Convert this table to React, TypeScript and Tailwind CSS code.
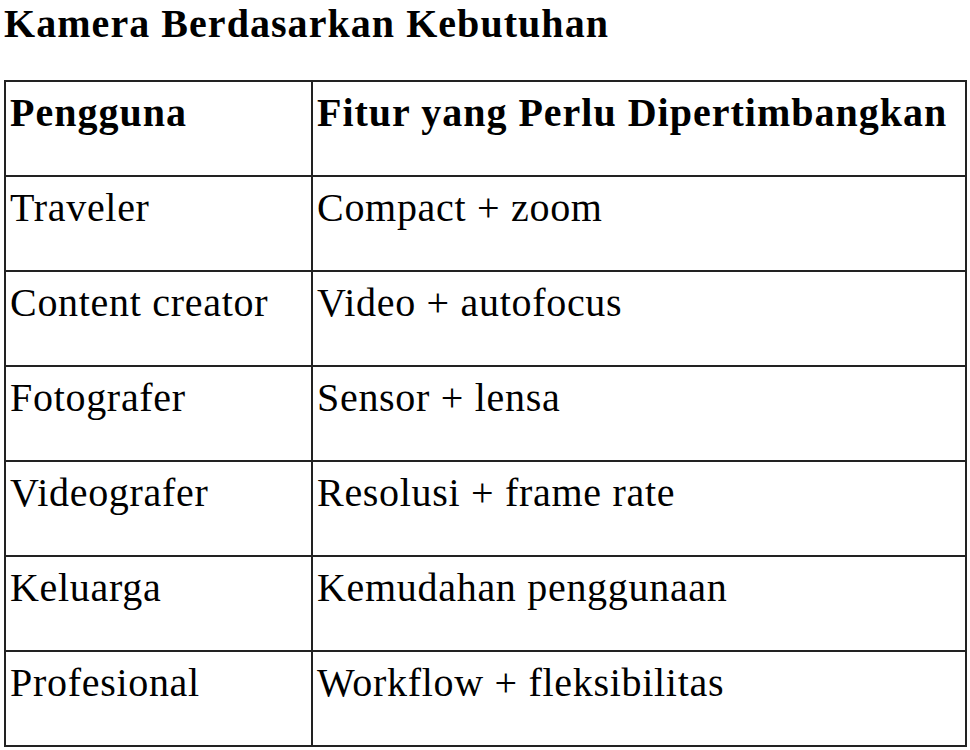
import React from "react";

const rows = [
  ["Traveler", "Compact + zoom"],
  ["Content creator", "Video + autofocus"],
  ["Fotografer", "Sensor + lensa"],
  ["Videografer", "Resolusi + frame rate"],
  ["Keluarga", "Kemudahan penggunaan"],
  ["Profesional", "Workflow + fleksibilitas"],
];

export default function App() {
  return (
    <div className="min-h-screen bg-white text-black font-['Liberation_Serif',serif] text-[40px] leading-[46px] tracking-[0.7px] pl-[4px] pt-[1px]">
      <h2 className="font-bold tracking-[1.05px]">Kamera Berdasarkan Kebutuhan</h2>
      <table className="mt-[33px] w-[963px] border-collapse border-2 border-[#222]">
        <thead>
          <tr className="h-[95px]">
            <th className="w-[307px] border-2 border-[#222] px-[4px] pt-[8px] text-left align-top font-bold tracking-[1px]">
              Pengguna
            </th>
            <th className="border-2 border-[#222] px-[4px] pt-[8px] text-left align-top font-bold tracking-[1px]">
              Fitur yang Perlu Dipertimbangkan
            </th>
          </tr>
        </thead>
        <tbody>
          {rows.map(([user, fitur]) => (
            <tr key={user} className="h-[95px]">
              <td className="border-2 border-[#222] px-[4px] pt-[8px] align-top">{user}</td>
              <td className="border-2 border-[#222] px-[4px] pt-[8px] align-top">{fitur}</td>
            </tr>
          ))}
        </tbody>
      </table>
    </div>
  );
}
